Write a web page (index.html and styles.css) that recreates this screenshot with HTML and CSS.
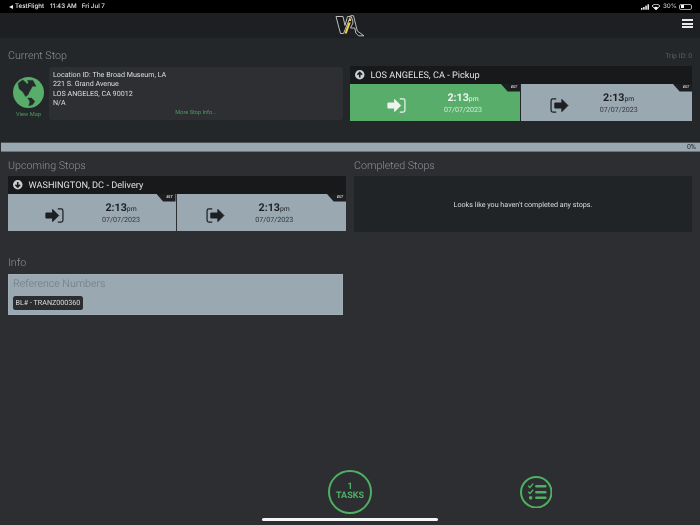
FILE: index.html
```html
<!DOCTYPE html>
<html lang="en">
<head>
<meta charset="utf-8">
<title>Trip</title>
<link rel="stylesheet" href="styles.css">
</head>
<body>
<div class="status">
  <div class="status-left"><span class="back"></span><span>TestFlight</span><span class="s-time">11:43 AM</span><span class="s-date">Fri Jul 7</span></div>
  <div class="status-right">
    <svg class="s-signal" viewBox="0 0 10 6"><rect x="0" y="4" width="1.6" height="2"/><rect x="2.4" y="3" width="1.6" height="3"/><rect x="4.8" y="1.500" width="1.6" height="4.500"/><rect x="7.2" y="0" width="1.6" height="6"/></svg>
    <svg class="s-wifi" viewBox="0 0 10 7"><path d="M5 7 0 2.200C2.800-.7 7.200-.7 10 2.200Z" fill="none" stroke="#fff" stroke-width="1"/><path d="M5 7 2.300 4.300C3.800 2.900 6.200 2.900 7.700 4.300Z"/></svg>
    <span class="s-pct">30%</span>
    <span class="battery"><span class="battery-fill"></span></span>
  </div>
</div>
<header class="header">
  <svg class="logo" viewBox="0 0 30 22">
    <path class="logo-white" d="M1 1.500H8L10 10.500 12.500 1.500H15.500L8.500 18.500H5.500Z"/>
    <path class="logo-white" d="M15.500 .7H18.500L22.300 16 29 20.800 23.500 20.800 20.800 18 19.800 13H15.500L18 8 17.500 4.500Z"/>
    <path class="logo-yellow" d="M13.500 7.500H15.700L11.700 18.500H9.500ZM14.300 3.800H16.500L16 6H13.600Z"/>
  </svg>
  <div class="menu"><span></span><span></span><span></span></div>
</header>
<section class="top">
  <div class="head-row"><h2 class="title">Current Stop</h2><span class="trip">Trip ID: 0</span></div>
  <div class="top-grid">
    <div class="stop-info">
      <div class="map">
        <svg class="globe" viewBox="0 0 32 32">
          <circle cx="16" cy="16" r="16" fill="#57ad69"/>
          <path class="land" d="M5.300 6.500 10 3 13 5.500 14.500 7.500 16 6 15 3.500 20.500 3.500 23.700 9.500 20 9.500 18.700 12 17 15 15.300 18.500 13 20 10.300 15.500 6.300 12Z"/>
          <path class="land" d="M15.300 21.800 19 21.800 22.500 25 20.300 28.500 16.300 29.800 17.500 25.500Z"/>
        </svg>
        <span class="view-map">View Map</span>
      </div>
      <div class="address">
        <p>Location ID: The Broad Museum, LA</p>
        <p>221 S. Grand Avenue</p>
        <p>LOS ANGELES, CA 90012</p>
        <p>N/A</p>
        <a class="more">More Stop Info...</a>
      </div>
    </div>
    <article class="stop">
      <div class="stop-head">
        <svg class="dir" viewBox="0 0 10 10"><circle cx="5" cy="5" r="5" fill="#ccd0d3"/><path d="M5 8V2.800M2.500 5 5 2.500 7.500 5" fill="none" stroke="#1b1d1f" stroke-width="1.700"/></svg>
        <span>LOS ANGELES, CA - Pickup</span>
      </div>
      <div class="times">
        <div class="time time-in time-done">
          <span class="tab">EST</span>
          <svg class="ico" viewBox="0 0 20 16"><path class="ico-arrow" d="M.800 5.300H8V1.500L14.500 8 8 14.500V10.700H.800Z"/><path class="ico-br" d="M13.500 1H17A2 2 0 0 1 19 3V13A2 2 0 0 1 17 15H13.500"/></svg>
          <div class="clock"><div class="hm">2:13<small>pm</small></div><div class="date">07/07/2023</div></div>
        </div>
        <div class="time time-out">
          <span class="tab">EST</span>
          <svg class="ico" viewBox="0 0 20 16"><path class="ico-br" d="M6.500 1H3A2 2 0 0 0 1 3V13A2 2 0 0 0 3 15H6.500"/><path class="ico-arrow" d="M5 5.300H12.500V1.500L19 8 12.500 14.500V10.700H5Z"/></svg>
          <div class="clock"><div class="hm">2:13<small>pm</small></div><div class="date">07/07/2023</div></div>
        </div>
      </div>
    </article>
  </div>
</section>
<div class="progress"><span>0%</span></div>
<section class="lower">
  <div class="col">
    <h2 class="title">Upcoming Stops</h2>
    <article class="stop">
      <div class="stop-head">
        <svg class="dir" viewBox="0 0 10 10"><circle cx="5" cy="5" r="5" fill="#ccd0d3"/><path d="M5 2V7.200M2.500 5 5 7.500 7.500 5" fill="none" stroke="#1b1d1f" stroke-width="1.700"/></svg>
        <span>WASHINGTON, DC - Delivery</span>
      </div>
      <div class="times">
        <div class="time time-in">
          <span class="tab">EST</span>
          <svg class="ico" viewBox="0 0 20 16"><path class="ico-arrow" d="M.800 5.300H8V1.500L14.500 8 8 14.500V10.700H.800Z"/><path class="ico-br" d="M13.500 1H17A2 2 0 0 1 19 3V13A2 2 0 0 1 17 15H13.500"/></svg>
          <div class="clock"><div class="hm">2:13<small>pm</small></div><div class="date">07/07/2023</div></div>
        </div>
        <div class="time time-out">
          <span class="tab">EST</span>
          <svg class="ico" viewBox="0 0 20 16"><path class="ico-br" d="M6.500 1H3A2 2 0 0 0 1 3V13A2 2 0 0 0 3 15H6.500"/><path class="ico-arrow" d="M5 5.300H12.500V1.500L19 8 12.500 14.500V10.700H5Z"/></svg>
          <div class="clock"><div class="hm">2:13<small>pm</small></div><div class="date">07/07/2023</div></div>
        </div>
      </div>
    </article>
  </div>
  <div class="col">
    <h2 class="title">Completed Stops</h2>
    <div class="empty">Looks like you haven't completed any stops.</div>
  </div>
</section>
<section class="info">
  <h2 class="title">Info</h2>
  <div class="refs">
    <h3>Reference Numbers</h3>
    <span class="chip">BL# - TRANZ000360</span>
  </div>
</section>
<footer class="footer">
  <span></span>
  <div class="tasks"><span>1</span><span>TASKS</span></div>
  <div class="list-wrap">
    <svg class="list" viewBox="0 0 32 32">
      <circle cx="16" cy="16" r="15" fill="none" stroke="#4fb062" stroke-width="2"/>
      <path d="M8 9.500 9.800 11.300 13 7.500M8 15.500 9.800 17.300 13 13.500" fill="none" stroke="#4fb062" stroke-width="1.400"/>
      <circle cx="10.500" cy="21.500" r="1.800" fill="#4fb062"/>
      <path d="M16 10H25M16 16H25M16 21.500H25" stroke="#4fb062" stroke-width="2.400" stroke-linecap="round"/>
    </svg>
  </div>
</footer>
<div class="home"></div>
</body>
</html>
```
FILE: styles.css
```css
* { box-sizing: border-box; }
html, body { margin: 0; padding: 0; }
html { background: #2c2e32; }
body {
  width: 700px;
  height: 525px;
  overflow: hidden;
  color: #d5d8da;
  font-family: Roboto, "Liberation Sans", sans-serif;
  text-rendering: geometricPrecision;
  will-change: transform;
  display: flex;
  flex-direction: column;
}
p, h2, h3 { margin: 0; font-weight: 300; }
p { font-weight: 400; }

.status {
  height: 13px;
  flex: none;
  background: #000;
  color: #e8e8e8;
  font: 500 6.200px/13px Inter, Roboto, sans-serif;
  display: flex;
  justify-content: space-between;
  padding: 0 8px 0 9px;
}
.status-left { display: flex; align-items: center; }
.back { width: 0; height: 0; border: 2px solid transparent; border-right: 4px solid #eee; border-left: 0; margin-right: 2px; }
.s-time { margin-left: 6px; }
.s-date { margin-left: 5px; }
.status-right { display: flex; align-items: center; gap: 2px; }
.s-pct { color: #bbb; margin-left: 1px; }
.s-signal { width: 9px; height: 6px; fill: #fff; }
.s-wifi { width: 8px; height: 6px; fill: #fff; }
.battery { width: 13px; height: 6px; border: 0.700px solid #aaa; border-radius: 2px; padding: 0.500px; display: block; }
.battery-fill { display: block; width: 30%; height: 100%; background: #fff; }

.header {
  height: 25px;
  flex: none;
  background: #1d1f22;
  display: flex;
  justify-content: center;
  align-items: center;
  position: relative;
}
.logo { width: 30px; height: 22px; margin-top: 1px; }
.logo-white { fill: #17191b; stroke: #bdbdbd; stroke-width: 1; stroke-linejoin: round; }
.logo-yellow { fill: #f0cf4a; }
.menu { position: absolute; right: 7px; top: 6px; width: 11px; display: flex; flex-direction: column; gap: 1.500px; }
.menu span { height: 2px; background: #e6e8e9; }

.top {
  height: 104px;
  flex: none;
  background: #24272a;
  padding: 10.500px 8px 0;
}
.head-row { display: flex; justify-content: space-between; align-items: center; height: 14px; }
.title { font-size: 10.700px; line-height: 14px; color: #8e9195; }
.trip { font-size: 6.800px; font-weight: 400; color: #5c6064; }
.top-grid { display: grid; grid-template-columns: 335px 342px; gap: 7px; margin-top: 3.500px; }

.stop-info { display: flex; align-items: flex-start; }
.map { width: 41px; display: flex; flex-direction: column; align-items: center; padding-top: 10.500px; }
.globe { width: 31px; height: 31px; }
.land { fill: #26292b; stroke: #26292b; stroke-width: .5; stroke-linejoin: round; }
.view-map { font-size: 5.700px; line-height: 8px; color: #4e9a60; margin-top: 3px; }
.address {
  width: 294px;
  height: 53px;
  margin-top: 1px;
  background: #2d2f33;
  border-radius: 3px;
  padding: 3px 4px;
  font-size: 7.150px;
  line-height: 9.300px;
  color: #dcdfe1;
  display: flex;
  flex-direction: column;
}
.more { text-align: center; font-size: 5.600px; line-height: 8px; color: #4e9a60; margin-top: 1.500px; }

.stop { display: flex; flex-direction: column; }
.stop-head {
  height: 18px;
  background: #17191b;
  display: flex;
  align-items: center;
  gap: 6px;
  padding-left: 5px;
  font-size: 9.200px;
  color: #dee0e1;
}
.dir { width: 9.500px; height: 9.500px; flex: none; }
.times { display: grid; grid-template-columns: 170px 171px; gap: 1px; height: 37px; }
.col .times { grid-template-columns: 167.500px 169.500px; }
.time {
  background: #9aa8b2;
  color: #1d1f22;
  display: flex;
  align-items: center;
  position: relative;
}
.time-in { padding-left: 37px; }
.time-out { padding-left: 29px; }
.time-done { background: #57ad69; color: #eef3ef; }
.tab {
  position: absolute;
  top: 0;
  right: 0;
  width: 19px;
  height: 7.500px;
  background: #1c1e21;
  clip-path: polygon(0 0, 100% 0, 100% 100%, 35% 100%);
  color: #ddd;
  font-size: 3.500px;
  font-style: italic;
  font-weight: 700;
  line-height: 7.500px;
  text-align: right;
  padding-right: 3px;
}
.ico { width: 19px; height: 15px; flex: none; margin-top: 6px; }
.ico-arrow { fill: #1d1f22; stroke: #1d1f22; stroke-width: 1; stroke-linejoin: round; }
.ico-br { fill: none; stroke: #1d1f22; stroke-width: 1.300; }
.time-done .ico-arrow { fill: #eef3ef; stroke: #eef3ef; }
.time-done .ico-br { stroke: #eef3ef; }
.clock { text-align: center; width: 40px; margin-top: 2px; }
.time-in .clock { margin-left: 37px; }
.time-out .clock { margin-left: 29.700px; }
.hm { font-size: 10.700px; font-weight: 700; line-height: 12px; white-space: nowrap; }
.hm small { font-size: 6.800px; font-weight: 400; }
.date { font-size: 7.150px; line-height: 10px; opacity: .85; }

.progress {
  height: 10px;
  flex: none;
  margin-left: 1px;
  background: #9aa8b2;
  border-top: 1px solid #4d5256;
  border-bottom: 1px solid #6c7479;
  color: #24272a;
  font-size: 7px;
  line-height: 8px;
  text-align: right;
  padding-right: 4px;
}

.lower { display: grid; grid-template-columns: 338px 338px; gap: 8px; padding: 6.500px 8px 0; }
.col { display: flex; flex-direction: column; gap: 3.500px; }
.empty {
  height: 56px;
  background: #212427;
  display: flex;
  align-items: center;
  justify-content: center;
  font-size: 7.150px;
  color: #dcdfe1;
}
.info { padding: 23.500px 8px 0; display: flex; flex-direction: column; gap: 4.500px; }
.refs {
  width: 335px;
  height: 41px;
  background: #9aa8b2;
  border: 1px solid #a0adb6;
  padding: 2px 4px;
}
.refs h3 { font-size: 10.600px; line-height: 13px; color: #6e7a84; }
.chip {
  display: inline-block;
  margin-top: 4px;
  height: 14px;
  padding: 0 2.500px;
  background: #2b2d31;
  border-radius: 2.500px;
  color: #dcdfe1;
  font-size: 7.150px;
  line-height: 14px;
}

.footer {
  margin-top: auto;
  display: grid;
  grid-template-columns: 1fr 44px 1fr;
  align-items: center;
}
.tasks {
  width: 44px;
  height: 44px;
  border: 2px solid #4fb062;
  border-radius: 50%;
  color: #4fb062;
  font-size: 9px;
  font-weight: 700;
  line-height: 9.300px;
  display: flex;
  flex-direction: column;
  align-items: center;
  justify-content: center;
}
.list-wrap { padding-left: 147.500px; display: flex; }
.list { width: 32.500px; height: 32.500px; }
.home {
  flex: none;
  width: 176px;
  height: 3px;
  margin: 4px auto;
  background: #f5f5f5;
  border-radius: 2px;
}
```
